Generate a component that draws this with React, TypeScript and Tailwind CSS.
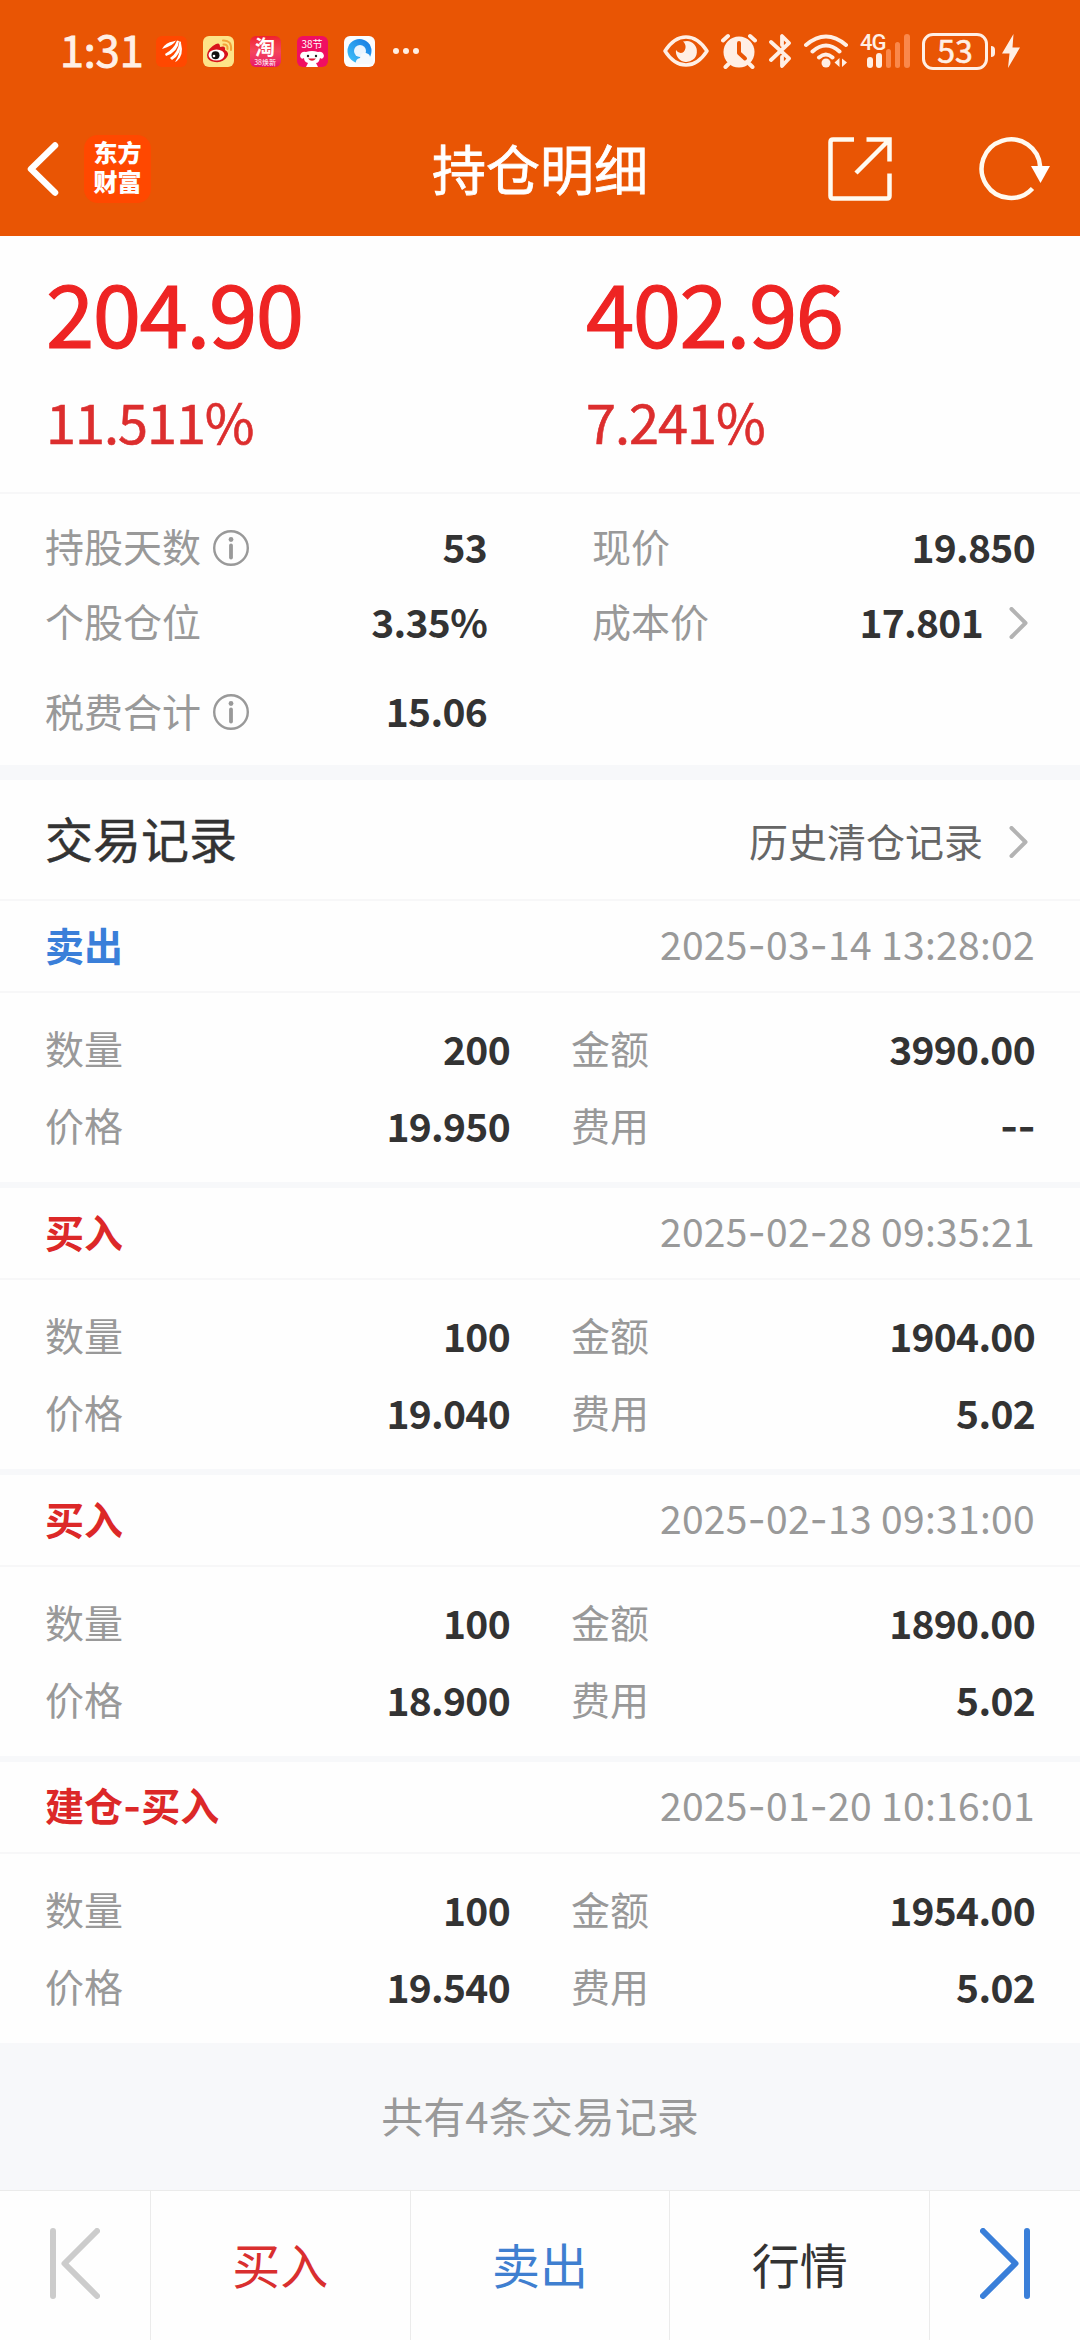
import React from "react";

const CREAM = "#ffefe5";

function AppIcons() {
  return (
    <div className="ml-3 flex items-center gap-4">
      <svg className="size-[31px]" viewBox="0 0 31 31">
        <rect width="31" height="31" rx="6" fill="#ff4800" />
        <path d="M6 13 Q10 6 17 5.500 L20 4.500 Q17 10 6 13Z M9 18 Q18 13 21 4.500 L23 5 Q22 16 10 20Z M14 22 Q22 17 23.500 5 L25 6 Q25 19 16 24Z M19 26 Q24 19 25 7 Q28 19 21 25Z" fill="#fff" />
      </svg>
      <svg className="size-[31px]" viewBox="0 0 31 31">
        <rect width="31" height="31" rx="6" fill="#fde488" />
        <path d="M4 19 Q5 12 13 8 Q17 6 17 11 Q23 9 22 14 Q27 17 24 21 Q20 27 12 26 Q4 25 4 19Z" fill="#d8131b" />
        <ellipse cx="13.500" cy="19" rx="8" ry="5.500" fill="#fff" />
        <circle cx="12.500" cy="19.300" r="4" fill="#111" />
        <circle cx="11" cy="20" r="1.300" fill="#fff" />
        <path d="M20 4.500 Q29 4 28 14 M20.500 8.500 Q25 8 24.500 13" fill="none" stroke="#f2a33a" strokeWidth="2" strokeLinecap="round" />
      </svg>
      <div className="flex size-[31px] flex-col items-center rounded-md bg-gradient-to-b from-[#f0202f] via-[#f4455c] to-[#e8106a]">
        <span className="text-[20px] font-bold leading-[22px] text-white">淘</span>
        <span className="whitespace-nowrap text-[7px] leading-[8px] text-white">38焕新</span>
      </div>
      <div className="flex size-[31px] flex-col items-center rounded-md bg-[#f00f62]">
        <span className="whitespace-nowrap text-[10px] leading-[15px] text-white">38节</span>
        <svg className="w-[26px]" viewBox="0 0 26 16">
          <path d="M1 5 Q2 0 7 1 Q13 -1 19 1 Q24 0 25 5 Q24 9 21 7 Q20 12 17 12 L19 16 H7 L9 12 Q5 11 5 7 Q2 9 1 5Z" fill="#fff" />
          <circle cx="9" cy="5" r="1.200" fill="#222" />
          <circle cx="17" cy="5" r="1.200" fill="#222" />
          <path d="M9 7.500 Q13 12 17 7.500Z" fill="#e01030" />
        </svg>
      </div>
      <svg className="size-[31px]" viewBox="0 0 31 31">
        <defs>
          <linearGradient id="ring" x1="0" y1="1" x2="1" y2="0">
            <stop offset="0" stopColor="#3fc4fb" />
            <stop offset="1" stopColor="#1577e0" />
          </linearGradient>
        </defs>
        <rect width="31" height="31" rx="6" fill="#fbfdff" />
        <circle cx="15.500" cy="15" r="12" fill="url(#ring)" />
        <circle cx="16" cy="15" r="6" fill="#e9f5ff" />
        <path d="M12 28 Q11 23 16 22 Q17 16 22 17 Q26 18 26 21 Q30 22 29 28Z" fill="#f4f9fd" />
      </svg>
      <div className="ml-0.5 flex gap-1">
        <i className="size-1.5 rounded-full bg-[#ffefe5]" />
        <i className="size-1.5 rounded-full bg-[#ffefe5]" />
        <i className="size-1.5 rounded-full bg-[#ffefe5]" />
      </div>
    </div>
  );
}

function StatusIcons() {
  return (
    <div className="ml-auto flex items-center">
      <svg className="h-9 w-[46px]" viewBox="0 0 46 36" fill="none">
        <path d="M2 18 Q11 4 23 4 Q35 4 44 18 Q35 32 23 32 Q11 32 2 18Z" stroke={CREAM} strokeWidth="3.500" strokeLinejoin="round" />
        <path d="M24 8 A10.500 10.500 0 1 1 13 17 Q15 20 17.500 20 Q21.500 20 22.500 15 Q23 11 20 8.500Z" fill={CREAM} />
      </svg>
      <svg className="ml-3 h-9 w-[36px]" viewBox="0 0 36 36" fill="none">
        <circle cx="18" cy="19" r="15.500" fill={CREAM} />
        <path d="M2 7.500 L7 3 M34 7.500 L29 3 M7.500 31 L4.500 34 M28.500 31 L31.500 34" stroke={CREAM} strokeWidth="4" strokeLinecap="round" />
        <path d="M18 10 V20 L24 25.500" stroke="#e95504" strokeWidth="4" strokeLinecap="round" strokeLinejoin="round" />
      </svg>
      <svg className="ml-3 h-9 w-[23px]" viewBox="0 0 23 36" fill="none" stroke={CREAM} strokeWidth="3.800" strokeLinecap="round" strokeLinejoin="round">
        <path d="M2 9 L20 25.500 L13 33 V24 M2 27 L20 10 L13 3 V12" />
      </svg>
      <svg className="ml-3 h-9 w-11" viewBox="0 0 44 36" fill="none" stroke={CREAM} strokeWidth="4" strokeLinecap="round">
        <path d="M2 12 Q22 -5 42 12 M8.500 18.500 Q22 6.500 35.500 18.500 M15 24.500 Q22 18.500 28.500 24.500" />
        <circle cx="22" cy="30" r="4.500" fill={CREAM} stroke="none" />
        <path d="M35.500 25 V34 L30.500 29.500Z M38 25.500 L43 29.500 L38 34Z" fill={CREAM} stroke="none" />
      </svg>
      <div className="relative ml-3 h-9 w-[51px]">
        <span className="absolute left-0 top-[1px] font-['Roboto'] text-[22px] font-medium leading-[17px] tracking-[-1px] text-[#ffefe5]">4G</span>
        <svg className="h-9 w-[51px]" viewBox="0 0 51 36" fill="none">
          <rect x="7" y="24" width="6" height="11" rx="3" fill={CREAM} />
          <rect x="16" y="20" width="6" height="15" rx="3" fill={CREAM} />
          <g fill="#ff9a63" fillOpacity=".75">
            <rect x="26" y="16" width="5" height="19" rx="2.500" />
            <rect x="35" y="9" width="5" height="26" rx="2.500" />
            <rect x="44" y="1" width="6" height="34" rx="3" />
          </g>
        </svg>
      </div>
      <div className="ml-[11px] flex h-[37px] w-[66px] items-center justify-center rounded-[11px] border-3 border-[#ffefe5] text-center text-[32px] leading-[30px] text-[#ffefe5]">
        <span className="-mt-1 [-webkit-text-stroke:0.6px]">53</span>
      </div>
      <i className="ml-[3px] h-[11px] w-[4px] rounded-r-full rounded-l-sm bg-[#ffefe5]" />
      <svg className="ml-[7px] h-9 w-[18px]" viewBox="0 0 18 36">
        <path d="M11.500 1 L0 20.500 H7.500 L6 35 L18 14.500 H10.500Z" fill={CREAM} />
      </svg>
    </div>
  );
}

function Header() {
  return (
    <header className="bg-[#e95504] text-white">
      <div className="flex h-[102px] items-center pl-[60px] pr-[60px]">
        <span className="-mt-1.5 text-[43px] leading-none text-[#ffefe5] [-webkit-text-stroke:1px]">1:31</span>
        <AppIcons />
        <StatusIcons />
      </div>
      <div className="relative flex h-[134px] items-center pl-[27px] pr-[29px]">
        <svg className="h-[54px] w-8" viewBox="0 0 32 54" fill="none" stroke="#fff" strokeWidth="6.500" strokeLinecap="round" strokeLinejoin="round">
          <path d="M28 3.500 L4 27 L28 50.500" />
        </svg>
        <div className="ml-[25px] flex h-[68px] w-[67px] flex-col items-center justify-center rounded-[14px] bg-[#ff4800] pb-1.5 text-[24px] font-black leading-[29px]">
          <span>东方</span>
          <span>财富</span>
        </div>
        <h1 className="pointer-events-none absolute inset-x-0 -mt-[3px] text-center text-[54px] leading-none [-webkit-text-stroke:0.8px]">持仓明细</h1>
        <svg className="ml-auto h-16 w-16" viewBox="0 0 64 64" fill="none" stroke="#fffaf0" strokeWidth="4.500">
          <path d="M26 2.500 H5 Q2.500 2.500 2.500 5 V59 Q2.500 61.500 5 61.500 H59 Q61.500 61.500 61.500 59 V36.500 M38.500 2.500 H61.500 V24.500 M61 3 L28 36" />
        </svg>
        <svg className="ml-[87px] h-16 w-[72px] overflow-visible" viewBox="0 0 72 64" fill="none">
          <path d="M53.500 51.500 A29.300 29.300 0 1 1 61.200 30" stroke="#fffaf0" strokeWidth="4.500" />
          <path d="M52 29 H71 L61.500 46Z" fill="#fff" />
        </svg>
      </div>
    </header>
  );
}

function Chevron() {
  return (
    <svg className="ml-[26px] mr-[6px] h-8 w-5" viewBox="0 0 20 32" fill="none" stroke="#b3b3b3" strokeWidth="4" strokeLinecap="round" strokeLinejoin="round">
      <path d="M2.500 2 L16.500 16 L2.500 30" />
    </svg>
  );
}

function Info() {
  return (
    <svg className="ml-3 size-9" viewBox="0 0 36 36" fill="none">
      <circle cx="18" cy="18" r="16.800" stroke="#999" strokeWidth="2.400" />
      <circle cx="18" cy="9.500" r="2.400" fill="#999" />
      <path d="M18 15.500 V27.500" stroke="#999" strokeWidth="3.800" strokeLinecap="round" />
    </svg>
  );
}

// Sets every hyphen in a face with a wider dash than the digits' own.
function Dashed({ text }: { text: string }) {
  return (
    <>
      {text.split(/(-)/).map((part, i) =>
        part === "-" ? (
          <span key={i} className="font-['Inter'] leading-none">-</span>
        ) : (
          part
        ),
      )}
    </>
  );
}

function Cell({ label, value, info, chevron }: { label: string; value: string; info?: boolean; chevron?: boolean }) {
  return (
    <div className="flex items-center justify-between">
      <div className="flex items-center text-[#999]">
        <span className="-mt-1">{label}</span>
        {info && <Info />}
      </div>
      <div className="flex items-center">
        <span className="-mt-[3px] font-bold tracking-[-0.7px]">
          <Dashed text={value} />
        </span>
        {chevron && <Chevron />}
      </div>
    </div>
  );
}

function Figure({ amount, rate }: { amount: string; rate: string }) {
  return (
    <div className="flex flex-col">
      <span className="text-[87px] leading-[88px] tracking-[-1.5px] text-[#ee2423] [-webkit-text-stroke:1.2px]">{amount}</span>
      <span className="mt-[38px] text-[54px] leading-[58px] tracking-[-1px] text-[#dc2e2e] [-webkit-text-stroke:0.6px]">{rate}</span>
    </div>
  );
}

const trades = [
  { kind: "卖出", sell: true, time: "2025-03-14 13:28:02", qty: "200", amount: "3990.00", price: "19.950", fee: "--" },
  { kind: "买入", time: "2025-02-28 09:35:21", qty: "100", amount: "1904.00", price: "19.040", fee: "5.02" },
  { kind: "买入", time: "2025-02-13 09:31:00", qty: "100", amount: "1890.00", price: "18.900", fee: "5.02" },
  { kind: "建仓-买入", time: "2025-01-20 10:16:01", qty: "100", amount: "1954.00", price: "19.540", fee: "5.02" },
];

export default function App() {
  return (
    <div className="flex h-[2340px] w-[1080px] flex-col overflow-hidden bg-[#fefefe] font-['Noto_Sans_CJK_SC',sans-serif] text-[39px] leading-none text-[#333]">
      <Header />

      <section className="grid h-[258px] grid-cols-2 border-b-2 border-[#f7f7f8] pt-[30px]">
        <div className="pl-[46px]">
          <Figure amount="204.90" rate="11.511%" />
        </div>
        <div className="pl-[46px]">
          <Figure amount="402.96" rate="7.241%" />
        </div>
      </section>

      <section className="grid h-[271px] grid-cols-[442px_443px] grid-rows-[75px_75px_104px] justify-between px-[45px] pt-[16px]">
        <Cell label="持股天数" value="53" info />
        <Cell label="现价" value="19.850" />
        <Cell label="个股仓位" value="3.35%" />
        <Cell label="成本价" value="17.801" chevron />
        <Cell label="税费合计" value="15.06" info />
      </section>

      <div className="h-[15px] shrink-0 bg-[#f7f8fa]" />

      <div className="flex h-[121px] shrink-0 items-center justify-between border-b-2 border-[#f7f7f8] px-[45px]">
        <h2 className="-mt-1.5 text-[48px] leading-none [-webkit-text-stroke:0.4px]">交易记录</h2>
        <div className="flex items-center pt-1">
          <span className="-mt-[3px] text-[#666]">历史清仓记录</span>
          <Chevron />
        </div>
      </div>

      {trades.map((t, i) => (
        <article key={t.time} className={i < 3 ? "h-[287px] shrink-0 border-b-6 border-[#f7f8fa]" : "h-[281px] shrink-0"}>
          <div className="flex h-[92px] items-center justify-between border-b-2 border-[#f7f7f8] px-[45px]">
            <span className={t.sell ? "-mt-1 font-bold text-[#3a7fd9]" : "-mt-1 font-bold text-[#dc2828]"}>
              <Dashed text={t.kind} />
            </span>
            <span className="-mt-1 whitespace-pre tracking-[0.3px] text-[#999]">
              <Dashed text={t.time} />
            </span>
          </div>
          <div className="grid grid-cols-[465px_464px] grid-rows-[77px_77px] justify-between px-[45px] pt-[18px]">
            <Cell label="数量" value={t.qty} />
            <Cell label="金额" value={t.amount} />
            <Cell label="价格" value={t.price} />
            <Cell label="费用" value={t.fee} />
          </div>
        </article>
      ))}

      <div className="flex h-[147px] shrink-0 items-center justify-center bg-[#f7f8fa] text-[42px] leading-none text-[#999]">
        <span className="-mt-1">共有4条交易记录</span>
      </div>

      <nav className="grid h-[150px] shrink-0 grid-cols-[151px_1fr_1fr_1fr_150px] border-t border-[#ebebeb] text-[48px] leading-none">
        <button className="flex items-center border-r border-[#ebebeb] pb-[4px] pl-[50px]">
          <svg className="h-[71px] w-[50px]" viewBox="0 0 50 71" fill="none" stroke="#ccc" strokeWidth="6" strokeLinecap="round" strokeLinejoin="round">
            <path d="M3 3 V68 M47 3 L14.500 35.500 L47 68" />
          </svg>
        </button>
        <button className="border-r border-[#ebebeb] pb-1.5 text-[#d92f2f]">买入</button>
        <button className="border-r border-[#ebebeb] pb-1.5 text-[#3f7fd0]">卖出</button>
        <button className="border-r border-[#ebebeb] pb-1.5">行情</button>
        <button className="flex items-center pb-[4px] pl-[50px]">
          <svg className="h-[71px] w-[50px]" viewBox="0 0 50 71" fill="none" stroke="#3a7fd9" strokeWidth="6" strokeLinecap="round" strokeLinejoin="round">
            <path d="M47 3 V68 M3 3 L35.500 35.500 L3 68" />
          </svg>
        </button>
      </nav>
    </div>
  );
}
